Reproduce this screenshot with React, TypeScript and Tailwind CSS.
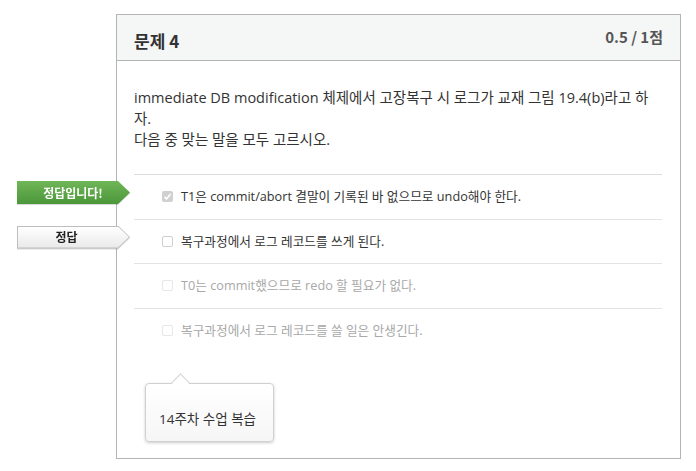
const font = { fontFamily: '"Open Sans", "Noto Sans CJK KR", sans-serif' };
const headFont = { fontFamily: '"Noto Sans CJK KR", "Noto Sans", sans-serif' };

type Choice = { text: string; checked?: boolean; muted?: boolean; badge?: "correct" | "answer" };

const choices: Choice[] = [
  { text: "T1은 commit/abort 결말이 기록된 바 없으므로 undo해야 한다.", checked: true, badge: "correct" },
  { text: "복구과정에서 로그 레코드를 쓰게 된다.", badge: "answer" },
  { text: "T0는 commit했으므로 redo 할 필요가 없다.", muted: true },
  { text: "복구과정에서 로그 레코드를 쓸 일은 안생긴다.", muted: true },
];

const Badge = ({ kind }: { kind: "correct" | "answer" }) => {
  const green = kind === "correct";
  return (
    <div className="absolute left-[-117px] top-[6px] h-[23px] w-[113px] drop-shadow-[0_1px_0_rgba(0,0,0,0.15)]" style={headFont}>
      <div
        className={
          green
            ? "flex h-full w-full items-center pl-[10px] bg-gradient-to-b from-[#6fb657] to-[#4b973a]"
            : "flex h-full w-full items-center pl-[10px] bg-[#bdbdbd]"
        }
        style={{ clipPath: "polygon(0 0, 101px 0, 113px 50%, 101px 100%, 0 100%)" }}
      >
        {green ? (
          <span className="w-[92px] text-center text-[12px] font-bold text-white">정답입니다!</span>
        ) : (
          <div
            className="absolute inset-[1px] flex items-center justify-center bg-gradient-to-b from-white to-[#e9e9e9]"
            style={{ clipPath: "polygon(0 0, 100px 0, 111px 50%, 100px 100%, 0 100%)" }}
          >
            <span className="pr-[14px] text-[12px] font-bold text-[#222]">정답</span>
          </div>
        )}
      </div>
    </div>
  );
};

const Check = ({ checked, muted }: { checked?: boolean; muted?: boolean }) => (
  <span
    className={
      checked
        ? "flex h-[11px] w-[11px] shrink-0 items-center justify-center rounded-[2px] bg-[#d0d0d0]"
        : muted
          ? "h-[11px] w-[11px] shrink-0 rounded-[2px] border border-[#e6e6e6] bg-white"
          : "h-[11px] w-[11px] shrink-0 rounded-[2px] border border-[#cfcfcf] bg-white"
    }
  >
    {checked && (
      <svg width="9" height="9" viewBox="0 0 9 9">
        <path d="M1.5 4.8 L3.6 6.8 L7.6 2" fill="none" stroke="white" strokeWidth="1.6" />
      </svg>
    )}
  </span>
);

export default function App() {
  return (
    <div className="min-h-[471px] bg-white pt-[14px] pl-[116px]" style={font}>
      <div className="w-[565px] h-[445px] border border-[#b4b4b4] bg-white">
        <div className="flex h-[46px] items-center justify-between border-b border-[#b4b4b4] bg-[#f5f6f6] px-[17px]" style={headFont}>
          <h2 className="pt-[7px] text-[17px] font-bold text-[#333]">문제 4</h2>
          <span className="text-[15px] font-bold text-[#555]">0.5 / 1점</span>
        </div>
        <div className="px-[17px] pt-[26px]">
          <p className="w-[528px] text-[14.5px] leading-[21px] text-[#333]">
            immediate DB modification 체제에서 고장복구 시 로그가 교재 그림 19.4(b)라고 하자.
            <br />
            다음 중 맞는 말을 모두 고르시오.
          </p>
          <ul className="mt-[24px] w-[528px]">
            {choices.map((c) => (
              <li
                key={c.text}
                className="relative flex h-[44.5px] items-center gap-[8px] border-t border-[#e3e3e3] pl-[28px] first:border-[#dcdcdc]"
              >
                {c.badge && <Badge kind={c.badge} />}
                <Check checked={c.checked} muted={c.muted} />
                <span className={c.muted ? "text-[12.7px] text-[#a8a8a8]" : "text-[12.7px] text-[#333]"}>
                  {c.text}
                </span>
              </li>
            ))}
          </ul>
          <div className="relative ml-[11px] mt-[31px] w-[129px]">
            <div className="absolute left-[29px] top-[-7px] h-[13px] w-[13px] rotate-45 border-l border-t border-[#d4d4d4] bg-white" />
            <div className="flex h-[59px] items-end rounded-[4px] border border-[#d0d0d0] bg-gradient-to-b from-white to-[#f6f6f6] pb-[12px] pl-[13px] shadow-[0_1px_3px_rgba(0,0,0,0.2)]">
              <span className="relative text-[13.5px] text-[#333]">14주차 수업 복습</span>
            </div>
            <div className="absolute left-[30px] top-[0px] h-[2px] w-[12px] bg-white" />
          </div>
        </div>
      </div>
    </div>
  );
}
